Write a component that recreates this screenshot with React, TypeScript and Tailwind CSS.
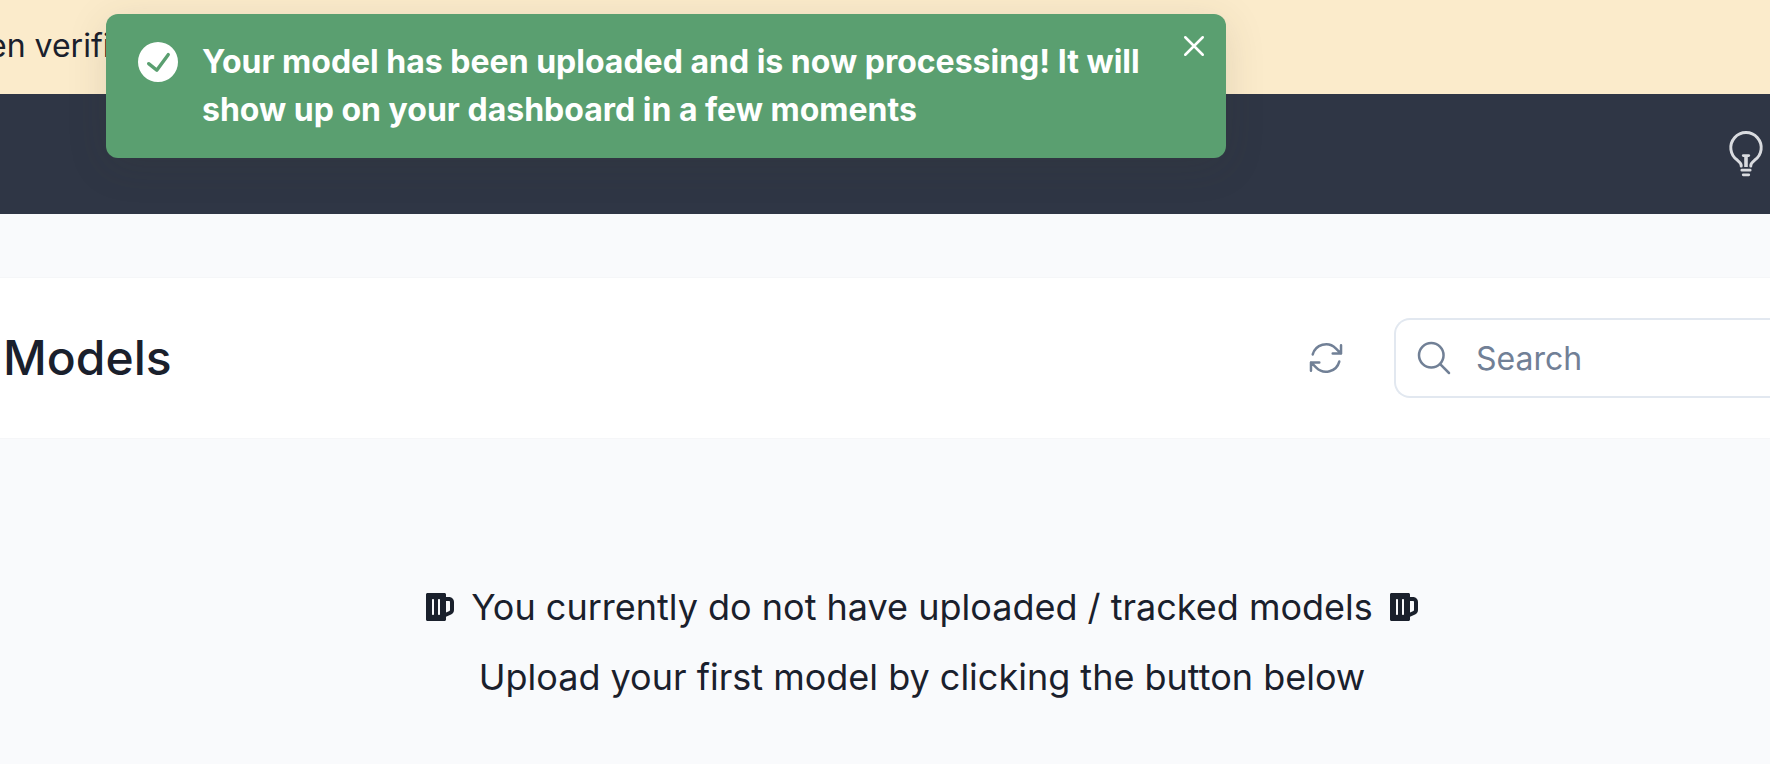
import { FaBeer } from 'react-icons/fa';
import { HiOutlineArrowPath } from 'react-icons/hi2';
import { IoCloseOutline, IoSearchOutline } from 'react-icons/io5';

function SuccessIcon() {
  return (
    <svg viewBox="0 0 24 24" className="h-10 w-10" fill="currentColor" aria-hidden="true">
      <path d="M12,0A12,12,0,1,0,24,12,12.014,12.014,0,0,0,12,0Zm6.927,8.2-6.845,9.289a1.011,1.011,0,0,1-1.43.188L5.764,13.769a1,1,0,1,1,1.25-1.562l4.076,3.261,6.227-8.451A1,1,0,1,1,18.927,8.2Z" />
    </svg>
  );
}

function BulbIcon() {
  return (
    <svg
      viewBox="0 0 48 48"
      className="h-12 w-12"
      fill="none"
      stroke="currentColor"
      strokeWidth="3"
      strokeLinecap="round"
      aria-hidden="true"
    >
      <path d="M19.2 36v-.6c0-2-1.400-3.200-3.700-5.100A15.200 15.200 0 1 1 32.500 30.300c-2.300 1.900-3.700 3.100-3.700 5.100V36" />
      <path d="M21.200 25.600h5.600" strokeWidth="2.600" />
      <path d="M24 25.600V37" strokeWidth="3.600" strokeLinecap="butt" />
      <path d="M19.800 40.200h8.400M21.200 44.800h5.600" strokeWidth="2.700" />
    </svg>
  );
}

function Toast() {
  return (
    <div
      role="status"
      className="absolute top-[14px] left-[106px] flex w-[1120px] max-w-full items-start rounded-xl bg-[#5a9f70] pt-6 pr-2 pb-6 pl-8 text-white shadow-[0_8px_40px_rgba(60,60,40,0.13)]"
    >
      <div className="mr-6 flex h-12 shrink-0 items-center">
        <SuccessIcon />
      </div>
      <p className="flex-1 text-[32px] leading-12 font-bold">
        Your model has been uploaded and is now processing! It will show up on your dashboard in a few moments
      </p>
      <button type="button" aria-label="Close" className="-mt-4 flex h-12 w-12 items-center justify-center">
        <IoCloseOutline className="h-10 w-10" />
      </button>
    </div>
  );
}

export default function App() {
  return (
    <div className="relative min-h-screen overflow-hidden bg-[#f9fafc] font-['Inter',sans-serif] text-[#1a202c]">
      <div className="flex h-[94px] items-center bg-[#fbebcb] pb-[2px]">
        <p className="-ml-3 text-[32px] whitespace-nowrap">en verifi</p>
      </div>

      <header className="flex h-[120px] items-center justify-end bg-[#2f3645]">
        <button type="button" aria-label="Tips" className="text-[#d9dbdf]">
          <BulbIcon />
        </button>
      </header>

      <main className="pt-16">
        <section className="flex h-40 items-center bg-white pl-[3px] shadow-[0_0_1px_rgba(0,0,0,0.1)]">
          <h1 className="flex-1 text-5xl font-medium">Models</h1>
          <button type="button" aria-label="Refresh" className="mr-12 text-[#718096]">
            <HiOutlineArrowPath className="h-10 w-10" />
          </button>
          <label className="flex h-20 w-[376px] shrink-0 items-center rounded-l-2xl border-2 border-r-0 border-[#e2e8f0] pl-[18px] text-[#718096]">
            <IoSearchOutline className="h-10 w-10 shrink-0" />
            <input
              type="search"
              aria-label="Search"
              placeholder="Search"
              className="ml-[22px] min-w-0 flex-1 bg-transparent pt-[2px] text-[32px] outline-none placeholder:text-[#718096]"
            />
          </label>
        </section>

        <section className="flex flex-col items-center gap-4 pt-[142px] pl-[74px] text-4xl">
          <div className="flex items-center gap-[15px] leading-[54px]">
            <FaBeer className="h-8 w-8" />
            <p>You currently do not have uploaded / tracked models</p>
            <FaBeer className="h-8 w-8" />
          </div>
          <p className="leading-[54px]">Upload your first model by clicking the button below</p>
        </section>
      </main>

      <Toast />
    </div>
  );
}
